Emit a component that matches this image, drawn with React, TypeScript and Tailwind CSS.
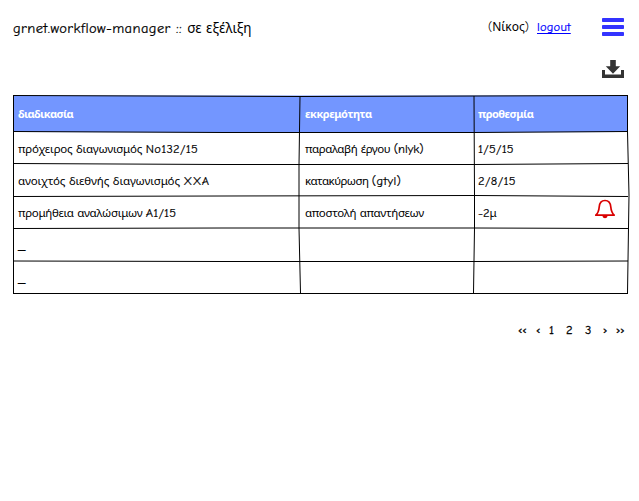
import React from "react";

type Piece = { text: string; tracking: string; latin?: boolean };

type Row = {
  process: Piece[];
  pending: Piece[];
  deadline: Piece[];
  height: string;
  alert?: boolean;
};

const rows: Row[] = [
  {
    process: [
      { text: "πρόχειρος διαγωνισμός ", tracking: "tracking-[-0.22px]" },
      { text: "No132/15", tracking: "tracking-[0.3px]", latin: true },
    ],
    pending: [
      { text: "παραλαβή έργου ", tracking: "tracking-[-0.43px]" },
      { text: "(nlyk)", tracking: "tracking-[0px]", latin: true },
    ],
    deadline: [{ text: "1/5/15", tracking: "tracking-[0.25px]", latin: true }],
    height: "h-8",
  },
  {
    process: [
      { text: "ανοιχτός διεθνής διαγωνισμός ", tracking: "tracking-[-0.13px]" },
      { text: "XXA", tracking: "tracking-[0.5px]", latin: true },
    ],
    pending: [
      { text: "κατακύρωση ", tracking: "tracking-[-0.55px]" },
      { text: "(gtyl)", tracking: "tracking-[0.4px]", latin: true },
    ],
    deadline: [{ text: "2/8/15", tracking: "tracking-[0.4px]", latin: true }],
    height: "h-8",
  },
  {
    process: [
      { text: "προμήθεια αναλώσιμων ", tracking: "tracking-[-0.3px]" },
      { text: "A1/15", tracking: "tracking-[0.2px]", latin: true },
    ],
    pending: [{ text: "αποστολή απαντήσεων", tracking: "tracking-[-0.3px]" }],
    deadline: [
      { text: "-2", tracking: "tracking-[0px]", latin: true },
      { text: "μ", tracking: "tracking-[0px]" },
    ],
    height: "h-8",
    alert: true,
  },
  { process: [{ text: "_", tracking: "text-[15px]" }], pending: [], deadline: [], height: "h-[33px]" },
  { process: [{ text: "_", tracking: "text-[15px]" }], pending: [], deadline: [], height: "h-8" },
];

const columns = "grid grid-cols-[287px_173px_1fr]";

function Label({ pieces }: { pieces: Piece[] }) {
  return (
    <span className="whitespace-pre">
      {pieces.map((piece) => (
        <span
          key={piece.text}
          className={`${piece.text === "_" ? "" : piece.latin ? "text-[12.5px]" : "text-[11.5px]"} ${piece.latin ? "[-webkit-text-stroke:0.2px]" : ""} ${piece.tracking}`}
        >
          {piece.text}
        </span>
      ))}
    </span>
  );
}

function MenuIcon() {
  return (
    <svg width="22" height="18" viewBox="0 0 22 18" fill="#3333ff">
      <rect width="22" height="4" rx="0.8" />
      <rect y="7" width="22" height="4" rx="0.8" />
      <rect y="14" width="22" height="4" rx="0.8" />
    </svg>
  );
}

function DownloadIcon() {
  return (
    <svg width="22" height="18" viewBox="0 0 22 18" fill="#333333">
      <path d="M8.2 0h5.6v6.2h4.400L11 13.800 3.800 6.2h4.400z" />
      <path d="M0 10h3v4.6h16V10h3v8H0z" />
    </svg>
  );
}

function BellIcon() {
  return (
    <svg width="22" height="20" viewBox="0 0 22 20" fill="none" stroke="#d90000" strokeWidth="1.7" strokeLinejoin="round">
      <path d="M1.8 16.2C4.200 14 4.900 11.5 5.200 8c.3-4.300 2.400-6.500 5.800-6.500S16.500 3.700 16.800 8c.3 3.500 1 6 3.400 8.200z" />
      <path d="M8.500 17h5c-.3 1.500-1.200 2.200-2.500 2.200S8.800 18.500 8.500 17z" fill="#d90000" stroke="none" />
    </svg>
  );
}

function SketchRules() {
  return (
    <svg className="pointer-events-none absolute inset-0" width="617" height="199" viewBox="0 0 617 199" fill="none" stroke="#000" strokeWidth="1">
      <path d="M.5.5L615 .5V37L300 37.500.5 37z" fill="#7396ff" stroke="none" />
      <path d="M0 .500L287 1.500 461 1 615 .500" />
      <path d="M0 36.500L210 37.500 462 37.500 615 36.500" />
      <path d="M0 68.500L210 69.500 462 69.500 615 68.500" />
      <path d="M0 101.500L210 101 462 100.500 615 101.500" />
      <path d="M0 133.500L210 133 462 133 615 133.500" />
      <path d="M0 166L210 166.500 462 166.500 615 166" />
      <path d="M0 198.500H615" />
      <path d="M.5.5L.500 198" />
      <path d="M287 1L286 70 286 133 287.500 198" />
      <path d="M461 1L461.500 100 461.500 133 460.500 198" />
      <path d="M614.500.5L614.500 37 616 100 614.500 198" />
    </svg>
  );
}

export default function App() {
  return (
    <main className="h-[501px] w-[639px] overflow-hidden bg-white font-['Comic_Sans_MS','Comic_Neue','Noto_Sans',sans-serif] text-[12px] leading-4 text-black">
      <header className="flex h-[54px] items-start pl-[13px] pr-[15px] whitespace-nowrap">
        <h1 className="mt-[19px] text-[14px] leading-5">
          <span className="text-[14.5px] tracking-[0.4px] [-webkit-text-stroke:0.2px]">grnet.workflow-manager :: </span>
          <span className="text-[13.5px]">σε εξέλιξη</span>
        </h1>
        <div className="ml-auto flex items-start">
          <span className="mt-[19px] w-[49px]">(Νίκος)</span>
          <a href="#logout" className="mt-[19px] w-[65px] text-[12.5px] tracking-[0.2px] text-[#0000ff] [-webkit-text-stroke:0.2px]">
            <span className="underline underline-offset-2">logout</span>
          </a>
          <button className="mt-[18px]" aria-label="menu"><MenuIcon /></button>
        </div>
      </header>
      <div className="flex h-[41px] justify-end pr-[15px] pt-[6px]"><DownloadIcon /></div>
      <section className="relative ml-[13px] h-[199px] w-[616px] whitespace-nowrap">
        <SketchRules />
        <div className="relative">
          <div className={`${columns} h-[37px] items-center pt-[3px] text-[11px] font-bold text-white`}>
            <div className="pl-[5px]"><span className="tracking-[-0.65px]">διαδικασία</span></div>
            <div className="pl-[5px]"><span className="tracking-[-0.45px]">εκκρεμότητα</span></div>
            <div className="pl-[5px]"><span className="tracking-[-0.5px]">προθεσμία</span></div>
          </div>
          {rows.map((row, i) => (
            <div key={i} className={`${columns} ${row.height} items-center pt-[2px]`}>
              <div className="pl-[5px]"><Label pieces={row.process} /></div>
              <div className="pl-[5px]"><Label pieces={row.pending} /></div>
              <div className="flex items-center justify-between pl-[5px] pr-[13px]">
                <Label pieces={row.deadline} />
                {row.alert && <span className="-mt-[8px]"><BellIcon /></span>}
              </div>
            </div>
          ))}
        </div>
      </section>
      <nav className="mt-[28px] flex pl-[518px] text-[12.5px] [-webkit-text-stroke:0.3px]">
        <span className="w-[18px]">‹‹</span>
        <span className="w-[13px]">‹</span>
        <span className="w-[17px]">1</span>
        <span className="w-[19px]">2</span>
        <span className="w-[18px]">3</span>
        <span className="w-[13px]">›</span>
        <span>››</span>
      </nav>
    </main>
  );
}
